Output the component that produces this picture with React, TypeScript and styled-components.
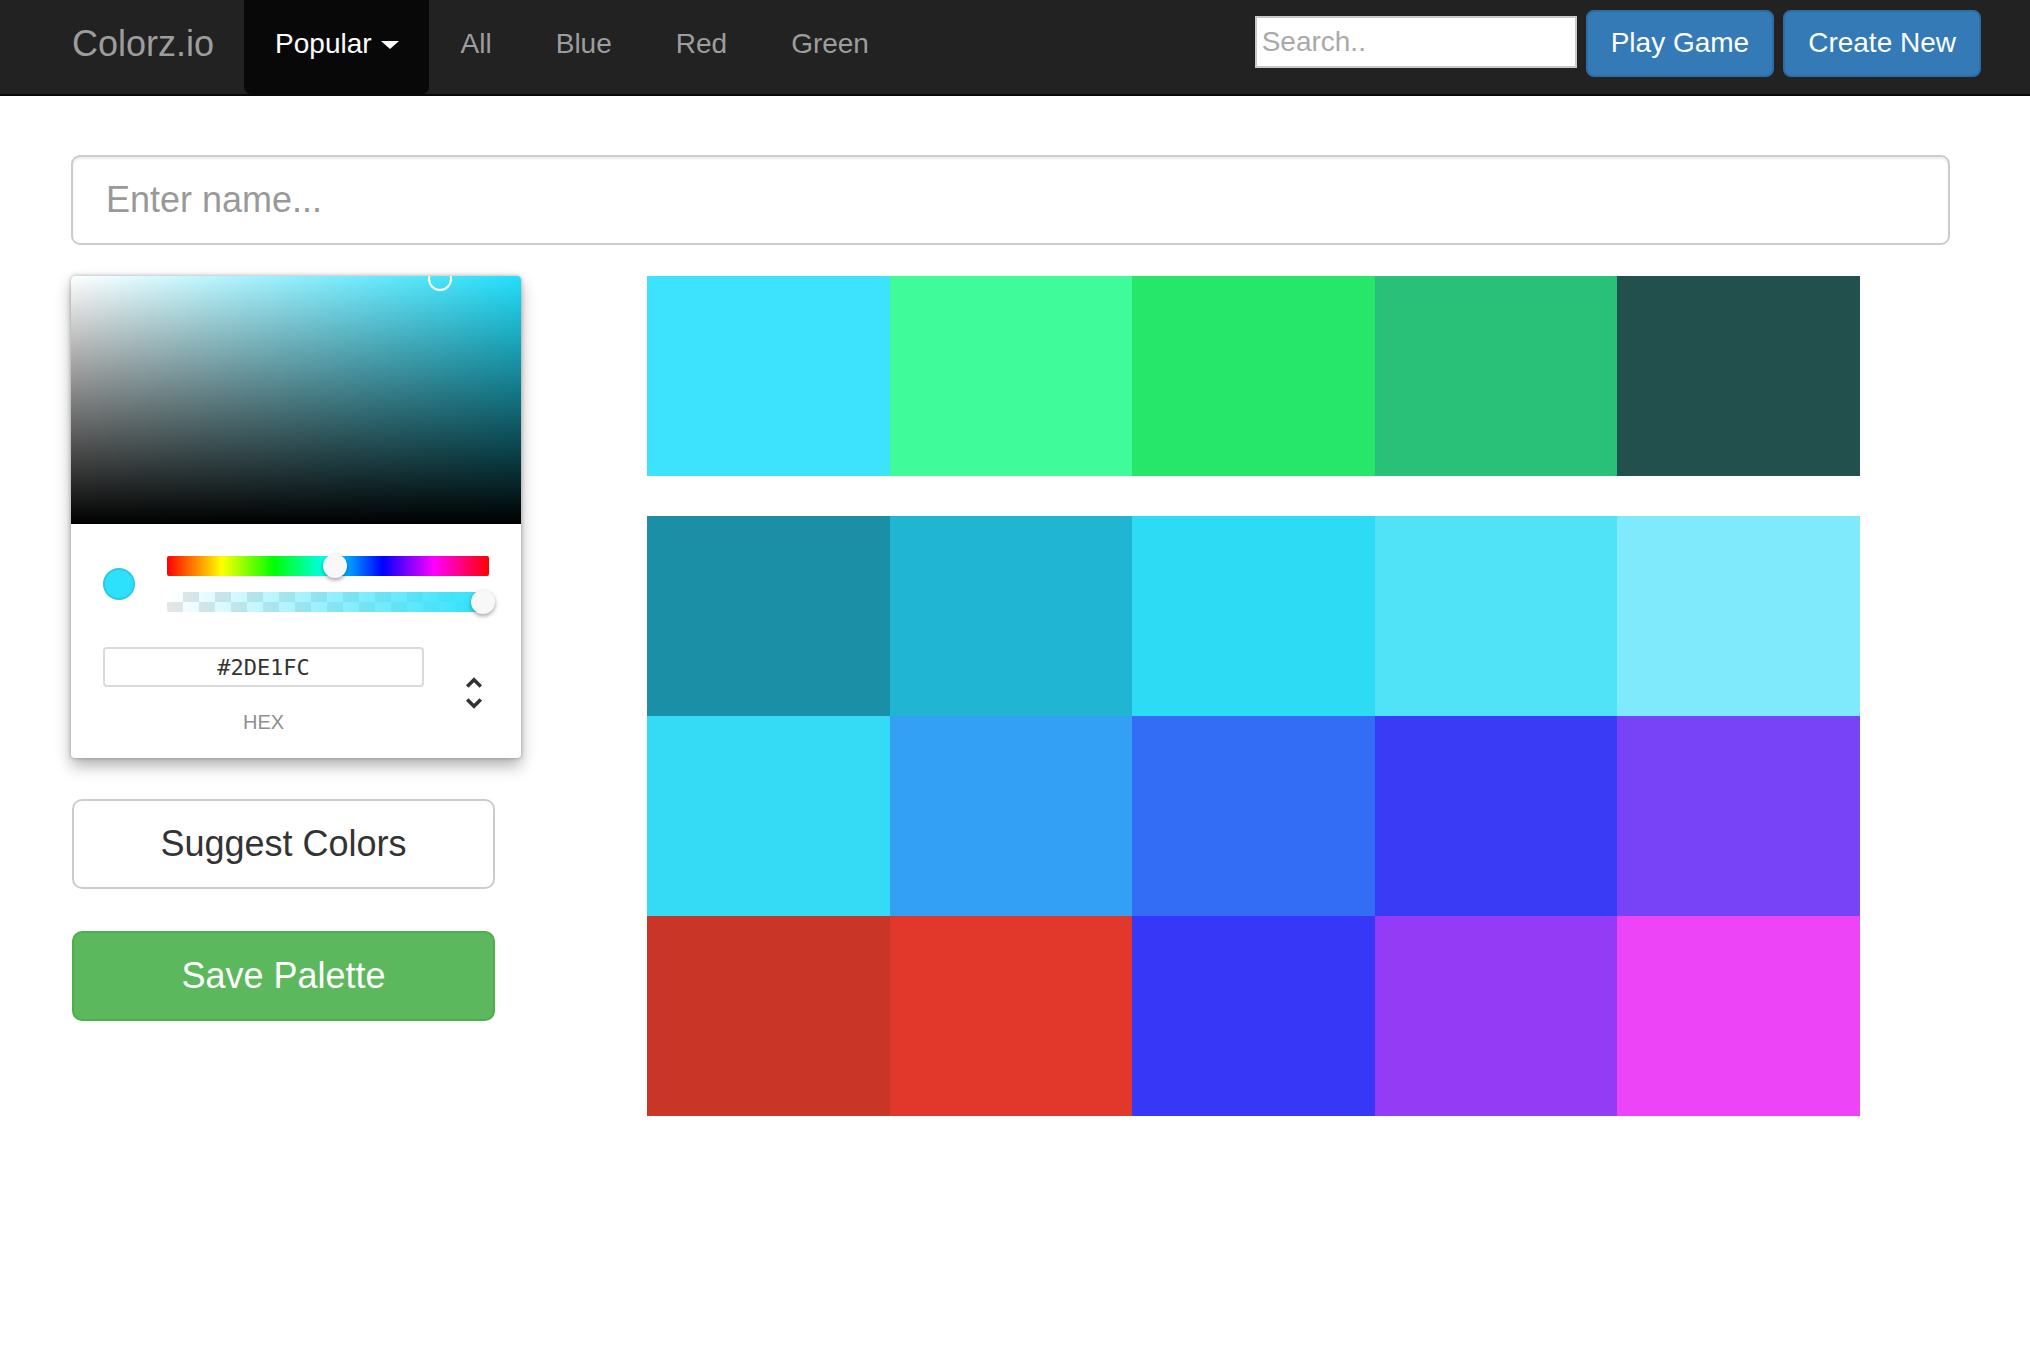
import React from "react";
import styled, { createGlobalStyle } from "styled-components";

const GlobalStyle = createGlobalStyle`
  html, body { margin: 0; padding: 0; background: #fff; }
  body { font-family: "Liberation Sans", Arial, Helvetica, sans-serif; color: #333; }
  * { box-sizing: border-box; }
`;

const Navbar = styled.nav`
  display: flex;
  align-items: stretch;
  height: 96px;
  background: #222;
  border-bottom: 2px solid #080808;
  padding: 0 49px 0 72px;
`;

const Brand = styled.a`
  display: flex;
  align-items: center;
  padding: 0 30px 6px 0;
  font-size: 36px;
  line-height: 36px;
  color: #9d9d9d;
  text-decoration: none;
`;

const NavList = styled.ul`
  display: flex;
  margin: 0;
  padding: 0;
  list-style: none;
`;

const NavItem = styled.li<{ $active?: boolean }>`
  display: flex;
  align-items: center;
  height: 94px;
  padding: ${(p) => (p.$active ? "0 30px 6px 31px" : "0 32px 6px")};
  font-size: 28px;
  line-height: 30px;
  color: ${(p) => (p.$active ? "#fff" : "#9d9d9d")};
  background: ${(p) => (p.$active ? "#080808" : "transparent")};
  border-radius: 0 0 7px 7px;
`;

const Caret = styled.span`
  display: inline-block;
  margin-left: 9px;
  margin-top: 2px;
  width: 0;
  height: 0;
  border-top: 8px solid #fff;
  border-left: 9px solid transparent;
  border-right: 9px solid transparent;
`;

const Spacer = styled.div`
  flex: 1;
`;

const RightGroup = styled.div`
  display: flex;
  align-items: center;
  gap: 9px;
  padding-bottom: 8px;
`;

const SearchInput = styled.input`
  width: 322px;
  height: 52px;
  margin-bottom: 2px;
  border: 2px solid #c9c9c9;
  border-radius: 0;
  padding: 0 5px;
  font-family: "Liberation Sans", Arial, sans-serif;
  font-size: 28px;
  color: #333;
  background: #fff;
  outline: none;
  &::placeholder { color: #a9a9a9; }
`;

const NavButton = styled.button`
  height: 67px;
  padding: 0 23px;
  border: 2px solid #2e6da4;
  border-radius: 8px;
  background: #337ab7;
  color: #fff;
  font-family: "Liberation Sans", Arial, sans-serif;
  font-size: 28px;
`;

const Main = styled.main`
  padding: 59px 80px 0 71px;
`;

const NameInput = styled.input`
  display: block;
  width: 100%;
  height: 90px;
  padding: 0 33px;
  border: 2px solid #ccc;
  border-radius: 9px;
  box-shadow: inset 0 2px 2px rgba(0, 0, 0, 0.075);
  font-family: "Liberation Sans", Arial, sans-serif;
  font-size: 36px;
  color: #555;
  outline: none;
  &::placeholder { color: #999; }
`;

const Workspace = styled.div`
  display: flex;
  align-items: flex-start;
  gap: 126px;
  margin-top: 31px;
`;

const LeftColumn = styled.div`
  display: flex;
  flex-direction: column;
  width: 450px;
`;

const PickerCard = styled.div`
  width: 450px;
  background: #fff;
  border-radius: 4px;
  box-shadow: 0 0 4px rgba(0, 0, 0, 0.3), 0 8px 16px rgba(0, 0, 0, 0.3);
  overflow: hidden;
`;

const Saturation = styled.div`
  position: relative;
  height: 248px;
  overflow: hidden;
  background:
    linear-gradient(to top, #000, rgba(0, 0, 0, 0)),
    linear-gradient(to right, #fff, rgba(255, 255, 255, 0)),
    hsl(188, 97%, 56%);
`;

const SatPointer = styled.div`
  position: absolute;
  width: 24px;
  height: 24px;
  border-radius: 50%;
  box-shadow: inset 0 0 0 2px #fff;
  transform: translate(-12px, -12px);
`;

const PickerBody = styled.div`
  padding: 32px 32px 24px;
`;

const ControlsRow = styled.div`
  display: flex;
  align-items: center;
`;

const SwatchCol = styled.div`
  width: 64px;
  flex-shrink: 0;
`;

const CurrentSwatch = styled.div<{ $color: string }>`
  width: 32px;
  height: 32px;
  border-radius: 50%;
  background: ${(p) => p.$color};
  box-shadow: inset 0 0 0 2px rgba(0, 0, 0, 0.1);
`;

const Sliders = styled.div`
  flex: 1;
  display: flex;
  flex-direction: column;
  gap: 16px;
`;

const HueBar = styled.div`
  position: relative;
  height: 20px;
  border-radius: 2px;
  background: linear-gradient(
    to right,
    #f00 0%,
    #ff0 17%,
    #0f0 33%,
    #0ff 50%,
    #00f 67%,
    #f0f 83%,
    #f00 100%
  );
`;

const AlphaBar = styled.div<{ $color: string }>`
  position: relative;
  height: 20px;
  border-radius: 2px;
  background:
    linear-gradient(to right, rgba(45, 225, 252, 0), ${(p) => p.$color}),
    repeating-conic-gradient(#e6e6e6 0% 25%, #fff 0% 50%) 0 0 / 32px 20px;
`;

const SliderThumb = styled.div`
  position: absolute;
  top: -2px;
  width: 24px;
  height: 24px;
  border-radius: 50%;
  background: #f8f8f8;
  box-shadow: 0 2px 4px rgba(0, 0, 0, 0.37);
  transform: translateX(-12px);
`;

const FieldsRow = styled.div`
  display: flex;
  margin-top: 35px;
`;

const FieldCol = styled.div`
  flex: 1;
  display: flex;
  flex-direction: column;
  align-items: stretch;
`;

const HexInput = styled.input`
  height: 40px;
  width: 100%;
  border: none;
  border-radius: 4px;
  box-shadow: inset 0 0 0 2px #dadada;
  text-align: center;
  font-family: "DejaVu Sans Mono", "Liberation Mono", monospace;
  font-size: 22px;
  color: #333;
  background: #fff;
  outline: none;
`;

const FieldLabel = styled.div`
  margin-top: 23px;
  text-align: center;
  font-size: 20px;
  line-height: 24px;
  color: #8f8f8f;
  text-transform: uppercase;
`;

const ToggleCol = styled.div`
  width: 65px;
  display: flex;
  justify-content: flex-end;
  align-items: flex-start;
  padding-top: 25px;
  svg { margin-right: -6px; }
`;

const ActionButton = styled.button<{ $variant: "default" | "success"; $gap: number }>`
  width: 423px;
  height: 90px;
  margin-top: ${(p) => p.$gap}px;
  margin-left: 1px;
  border-radius: 10px;
  font-family: "Liberation Sans", Arial, sans-serif;
  font-size: 36px;
  border: 2px solid ${(p) => (p.$variant === "success" ? "#4cae4c" : "#ccc")};
  background: ${(p) => (p.$variant === "success" ? "#5cb85c" : "#fff")};
  color: ${(p) => (p.$variant === "success" ? "#fff" : "#333")};
`;

const Palettes = styled.div`
  display: flex;
  flex-direction: column;
  gap: 40px;
  width: 1213px;
`;

const SwatchGrid = styled.div<{ $rows: number }>`
  display: grid;
  grid-template-columns: repeat(5, 1fr);
  grid-template-rows: repeat(${(p) => p.$rows}, 200px);
`;

const Swatch = styled.div<{ $color: string }>`
  background: ${(p) => p.$color};
`;

const palette = ["#3de3fd", "#3ffb9a", "#27e76a", "#29c177", "#22504c"];
const suggestions = [
  "#1a8fa6", "#20b6d3", "#2ddbf5", "#50e3f7", "#7feafc",
  "#35daf5", "#34a0f5", "#336cf5", "#3a3cf5", "#7843f7",
  "#c93628", "#e2382b", "#3737f7", "#943cf5", "#ee44f8",
];

const UnfoldIcon = () => (
  <svg width="42" height="42" viewBox="0 0 24 24">
    <path
      fill="#333"
      d="M12,18.17L8.83,15L7.42,16.41L12,21L16.59,16.41L15.17,15M12,5.83L15.17,9L16.58,7.59L12,3L7.41,7.59L8.83,9L12,5.83Z"
    />
  </svg>
);

export default function App() {
  const current = "#2DE1FC";
  return (
    <>
      <GlobalStyle />
      <Navbar>
        <Brand href="#">Colorz.io</Brand>
        <NavList>
          <NavItem $active>
            Popular
            <Caret />
          </NavItem>
          <NavItem>All</NavItem>
          <NavItem>Blue</NavItem>
          <NavItem>Red</NavItem>
          <NavItem>Green</NavItem>
        </NavList>
        <Spacer />
        <RightGroup>
          <SearchInput placeholder="Search.." />
          <NavButton>Play Game</NavButton>
          <NavButton>Create New</NavButton>
        </RightGroup>
      </Navbar>
      <Main>
        <NameInput placeholder="Enter name..." />
        <Workspace>
          <LeftColumn>
            <PickerCard>
              <Saturation>
                <SatPointer style={{ left: "82%", top: "1.2%" }} />
              </Saturation>
              <PickerBody>
                <ControlsRow>
                  <SwatchCol>
                    <CurrentSwatch $color={current} />
                  </SwatchCol>
                  <Sliders>
                    <HueBar>
                      <SliderThumb style={{ left: "52.2%" }} />
                    </HueBar>
                    <AlphaBar $color={current}>
                      <SliderThumb style={{ left: "calc(100% - 6px)" }} />
                    </AlphaBar>
                  </Sliders>
                </ControlsRow>
                <FieldsRow>
                  <FieldCol>
                    <HexInput defaultValue="#2DE1FC" />
                    <FieldLabel>hex</FieldLabel>
                  </FieldCol>
                  <ToggleCol>
                    <UnfoldIcon />
                  </ToggleCol>
                </FieldsRow>
              </PickerBody>
            </PickerCard>
            <ActionButton $variant="default" $gap={41}>Suggest Colors</ActionButton>
            <ActionButton $variant="success" $gap={42}>Save Palette</ActionButton>
          </LeftColumn>
          <Palettes>
            <SwatchGrid $rows={1}>
              {palette.map((c, i) => (
                <Swatch key={i} $color={c} />
              ))}
            </SwatchGrid>
            <SwatchGrid $rows={3}>
              {suggestions.map((c, i) => (
                <Swatch key={i} $color={c} />
              ))}
            </SwatchGrid>
          </Palettes>
        </Workspace>
      </Main>
    </>
  );
}
